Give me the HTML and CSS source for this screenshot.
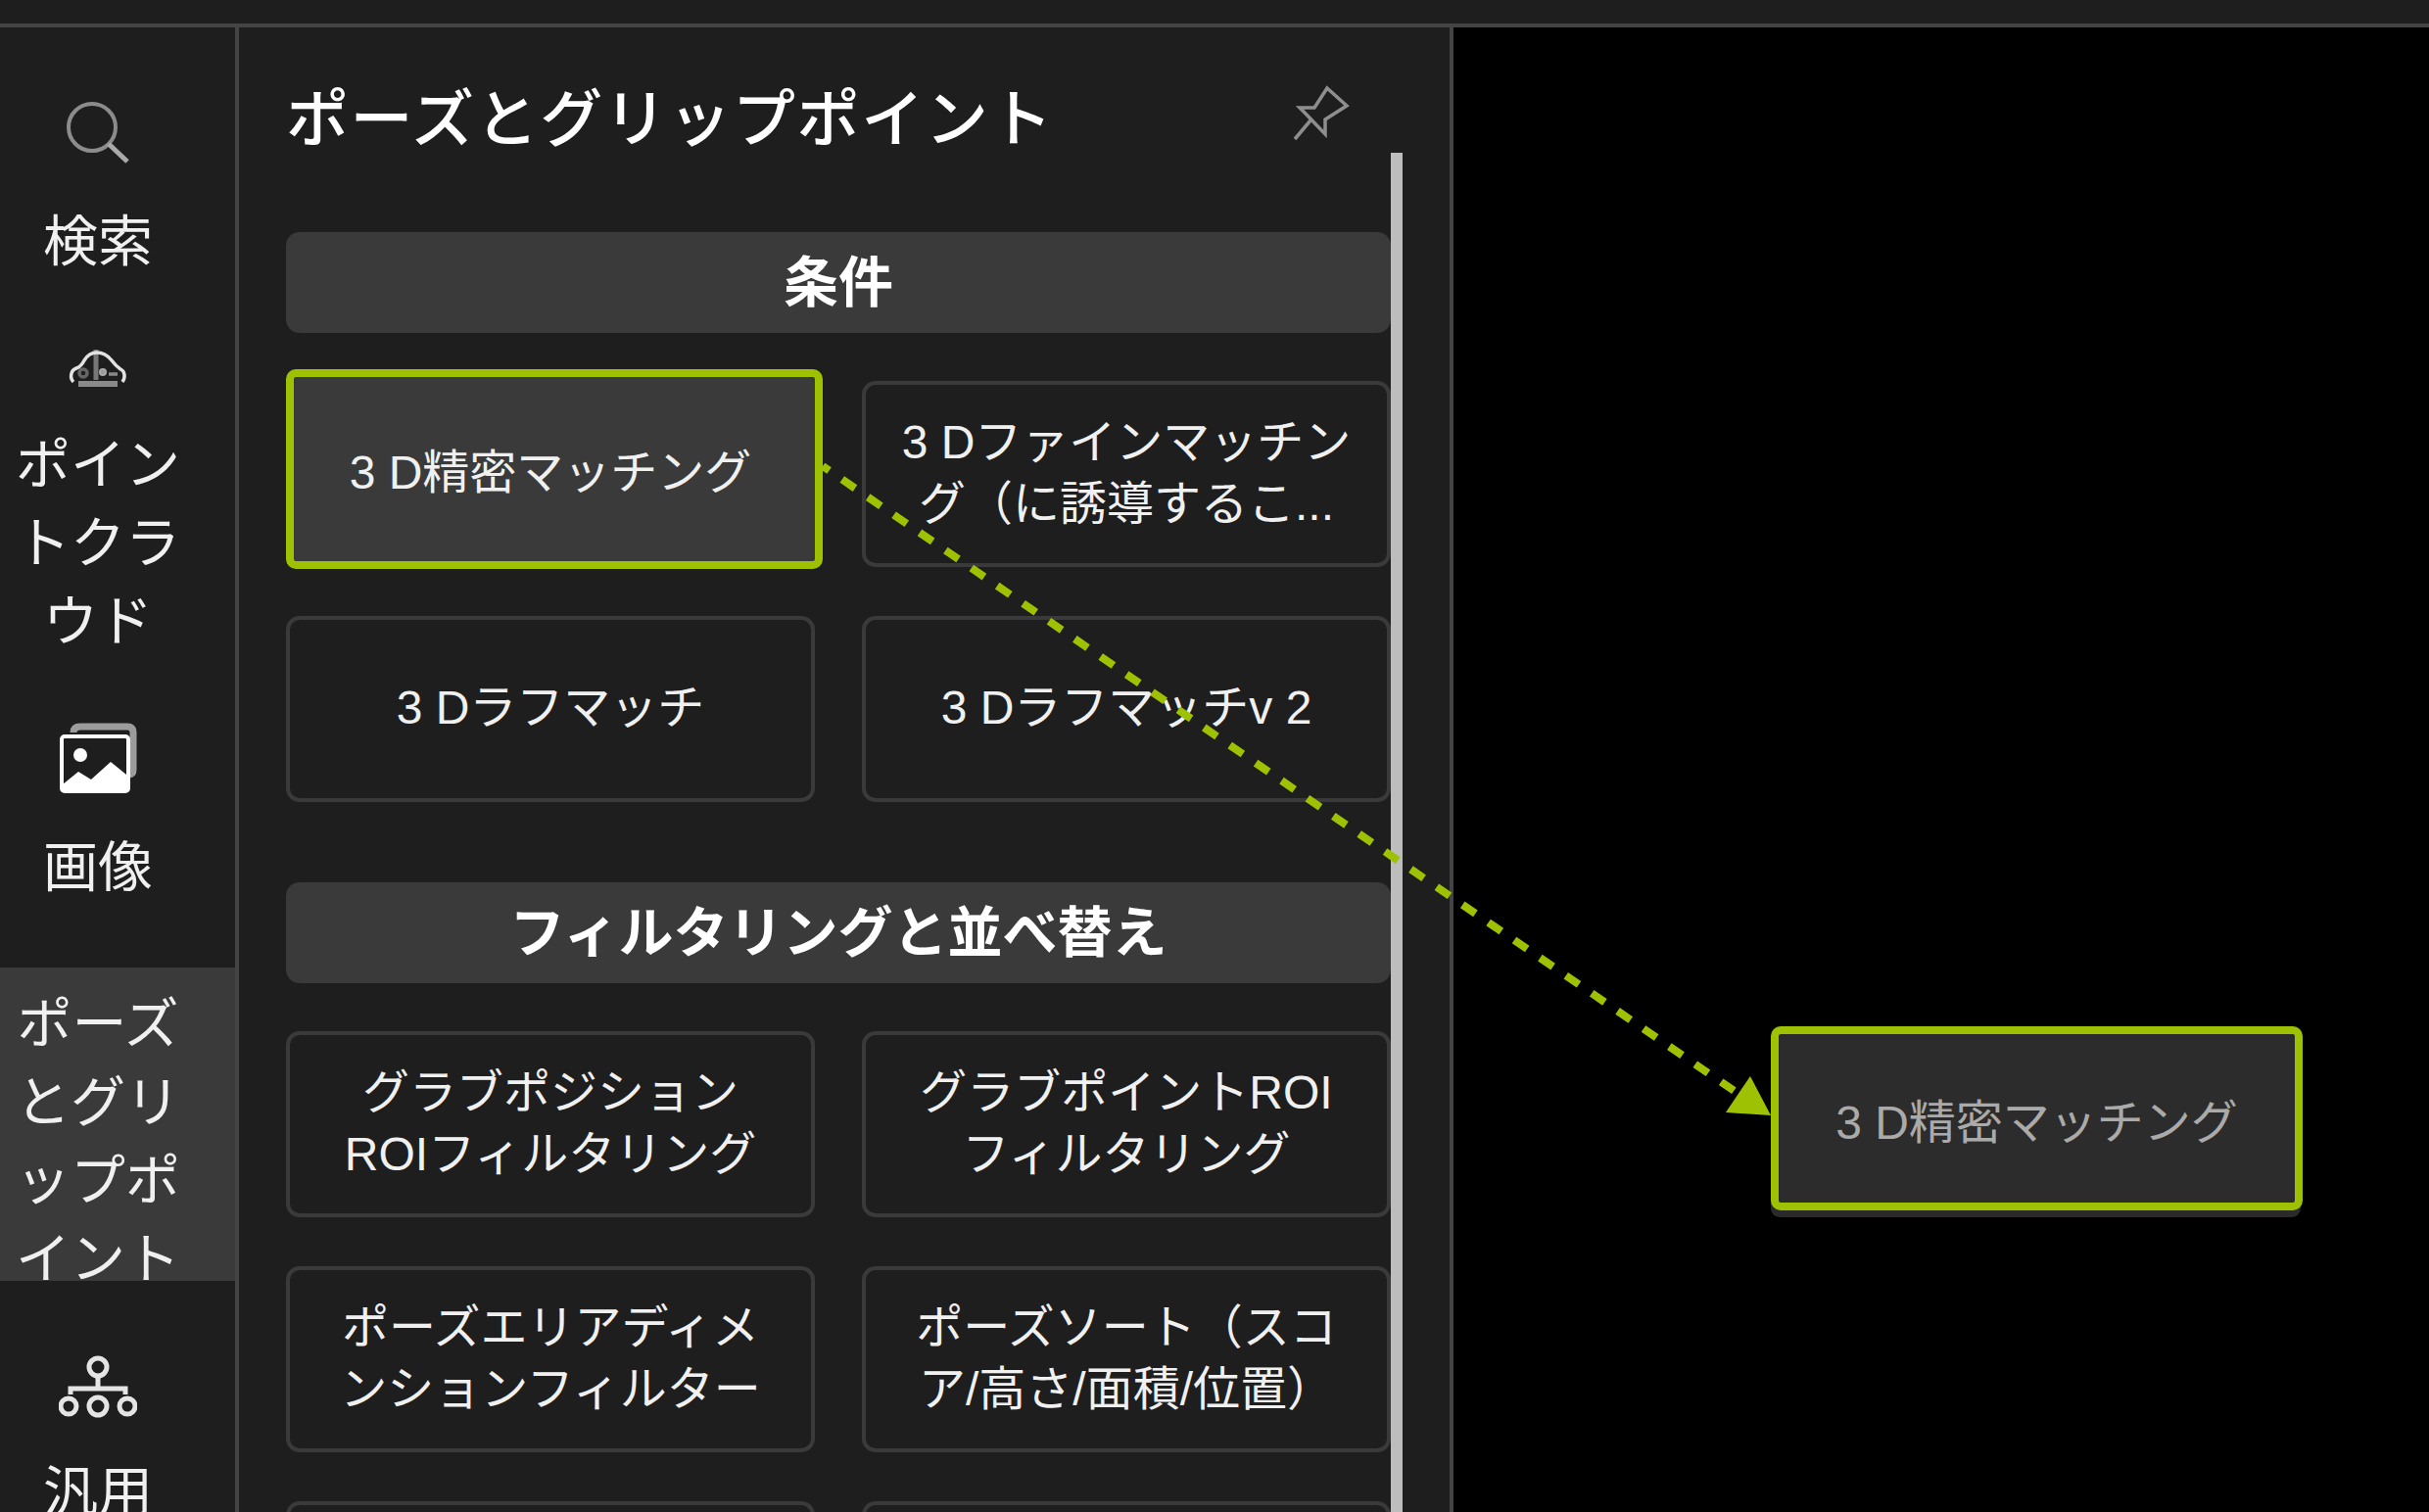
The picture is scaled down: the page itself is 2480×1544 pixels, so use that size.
FILE: index.html
```html
<!DOCTYPE html>
<html lang="ja">
<head>
<meta charset="UTF-8">
<title>ポーズとグリップポイント</title>
<link rel="stylesheet" href="styles.css">
</head>
<body>
<div class="page">
  <div class="topbar"></div>
  <div class="main">
    <!-- left nav -->
    <nav class="sidebar">
      <div class="nav-item">
        <svg class="nav-icon icon-search" viewBox="0 0 80 80" fill="none" stroke="#8c8c8c" stroke-width="4"><circle cx="34" cy="34" r="24"/><path d="M51 51 L70 69" stroke-width="5" stroke="#aaa"/></svg>
        <div class="nav-label">検索</div>
      </div>
      <div class="nav-item">
        <svg class="nav-icon icon-cloud" viewBox="0 0 80 56" fill="none" stroke="#e2e2e2" stroke-width="3.5"><path d="M38 9 V40" stroke="#777" stroke-width="5"/><circle cx="25" cy="33" r="4" stroke="#666"/><circle cx="45" cy="32" r="3" fill="#999" stroke="#aaa" stroke-width="2"/><path d="M51 34 H60" stroke="#888"/><path d="M15 42 C11 38 12 30 18 28 C21 27 24 24 26 20 C29 15 33 12 39 12 C45 12 50 15 54 20 C57 24 60 27 63 29 C68 31 68 38 65 42"/><path d="M20 44 H60" stroke="#8a8a8a" stroke-width="6"/></svg>
        <div class="nav-label">ポイントクラウド</div>
      </div>
      <div class="nav-item">
        <svg class="nav-icon icon-image" viewBox="0 0 80 82"><path d="M15 12 Q15 6 22 6 H70 Q76 6 76 12 V50 Q76 55 71 55" fill="none" stroke="#9c9c9c" stroke-width="7"/><rect x="3" y="16" width="68" height="56" rx="3" fill="#1e1e1e" stroke="#fff" stroke-width="4"/><circle cx="22" cy="35" r="7" fill="#fff"/><path d="M4 65 L20 52 L33 60 L53 42 L69 55 V73 H4 Z" fill="#fff"/></svg>
        <div class="nav-label">画像</div>
      </div>
      <div class="nav-item active">
        <div class="nav-label">ポーズとグリップポイント</div>
      </div>
      <div class="nav-item">
        <svg class="nav-icon icon-tree" viewBox="0 0 80 80" fill="none" stroke="#e4e4e4" stroke-width="5"><circle cx="40" cy="20" r="9"/><path d="M40 29 V42 M12 48 V42 H68 V48"/><circle cx="10" cy="60" r="8"/><circle cx="40" cy="60" r="9"/><circle cx="70" cy="60" r="8"/></svg>
        <div class="nav-label">汎用</div>
      </div>
    </nav>

    <!-- step panel -->
    <section class="panel">
      <header class="panel-head">
        <h1>ポーズとグリップポイント</h1>
        <svg class="pin" viewBox="0 0 60 60" fill="none" stroke="#8e8e8e" stroke-width="3.5"><path d="M35 4 L55 22 L33 36 V51 L12 29 L7 24 H22 Z"/><path d="M18 37 L2 56"/></svg>
      </header>
      <div class="panel-body">
        <div class="panel-scroll">
          <h2 class="group-title">条件</h2>
          <div class="cards">
            <div class="card selected"><span>3 D精密マッチング</span></div>
            <div class="card"><span>3 Dファインマッチング（に誘導するこ...</span></div>
            <div class="card"><span>3 Dラフマッチ</span></div>
            <div class="card"><span>3 Dラフマッチv 2</span></div>
          </div>
          <h2 class="group-title second">フィルタリングと並べ替え</h2>
          <div class="cards">
            <div class="card"><span>グラブポジション<br>ROIフィルタリング</span></div>
            <div class="card"><span>グラブポイントROI<br>フィルタリング</span></div>
            <div class="card"><span>ポーズエリアディメンションフィルター</span></div>
            <div class="card"><span>ポーズソート（スコア/高さ/面積/位置）</span></div>
            <div class="card"></div>
            <div class="card"></div>
          </div>
        </div>
        <div class="scrollbar"></div>
      </div>
    </section>

    <!-- flow canvas -->
    <section class="canvas">
      <div class="node">3 D精密マッチング</div>
    </section>
  </div>

  <svg class="link" viewBox="0 0 2480 1544">
    <path d="M840 476 L1775 1117" stroke="#9fc104" stroke-width="8" stroke-dasharray="16 16" stroke-dashoffset="8" fill="none"/>
    <polygon points="1787,1099 1762,1136 1808,1139" fill="#9fc104"/>
  </svg>
</div>
</body>
</html>
```

FILE: styles.css
```css
:root{
  --bg:#1e1e1e;--line:#444;--soft:#3a3a3a;--green:#9fc104;--text:#f0f0f0;
}
*{box-sizing:border-box;margin:0;padding:0;}
html,body{height:100%;overflow:hidden;}
body{background:#000;color:var(--text);font-family:"Liberation Sans","Noto Sans CJK JP",sans-serif;}
.page{position:relative;width:2480px;height:1544px;overflow:hidden;}
.topbar{height:28px;background:var(--bg);border-bottom:4px solid var(--line);}
.main{display:flex;height:1516px;}

/* left nav */
.sidebar{width:244px;flex:none;background:var(--bg);border-right:4px solid var(--line);padding-top:36px;overflow:hidden;}
.nav-item{padding:32px 48px 32px 8px;text-align:center;}
.nav-item:nth-child(-n+2){padding-bottom:29px;}
.nav-icon{display:block;margin:0 auto 28px;width:80px;}
.icon-search{height:80px;margin-bottom:31px;}
.icon-cloud{height:56px;margin-bottom:31px;}
.icon-image{height:82px;}
.icon-tree{height:80px;}
.nav-label{font-size:56px;line-height:80px;word-break:break-all;}
.nav-item.active{background:var(--soft);height:320px;margin:30px 0 36px;padding-top:18px;padding-bottom:0;overflow:hidden;}

/* step panel */
.panel{width:1240px;flex:none;background:var(--bg);border-right:4px solid var(--line);display:flex;flex-direction:column;}
.panel-head{height:128px;flex:none;display:flex;justify-content:space-between;align-items:flex-start;padding:52px 100px 0 48px;}
.panel-head h1{font-size:64px;line-height:84px;font-weight:500;letter-spacing:1.6px;color:#fff;}
.pin{width:60px;height:60px;margin-top:6px;}
.panel-body{flex:1;display:flex;min-height:0;padding-left:48px;}
.panel-scroll{width:1128px;flex:none;padding-top:81px;overflow:hidden;}
.scrollbar{width:12px;flex:none;background:#bdbdbd;}
.group-title{height:103px;background:var(--soft);border-radius:14px;font-size:56px;line-height:103px;font-weight:700;text-align:center;color:#fff;}
.group-title.second{margin-top:82px;}
.cards{display:grid;grid-template-columns:540px 540px;grid-auto-rows:190px;gap:50px 48px;margin-top:49px;}
.card{display:flex;align-items:center;justify-content:center;border:4px solid var(--soft);border-radius:14px;padding:0 32px 3px;font-size:48px;line-height:63px;text-align:center;color:var(--text);}
.card.selected{margin:-12px -8px -2px 0;padding:6px 40px 0 32px;border:8px solid var(--green);border-radius:10px;background:var(--soft);}

/* flow canvas */
.canvas{flex:1;position:relative;background:#000;}
.node{position:absolute;left:324px;top:1020px;width:543px;height:188px;display:flex;align-items:center;justify-content:center;background:#2c2c2c;border:8px solid var(--green);border-radius:10px;box-shadow:-1px 8px 0 -1px #2a2a2a;font-size:48px;color:#aaa;}
.link{position:absolute;left:0;top:0;width:2480px;height:1544px;pointer-events:none;}
```
